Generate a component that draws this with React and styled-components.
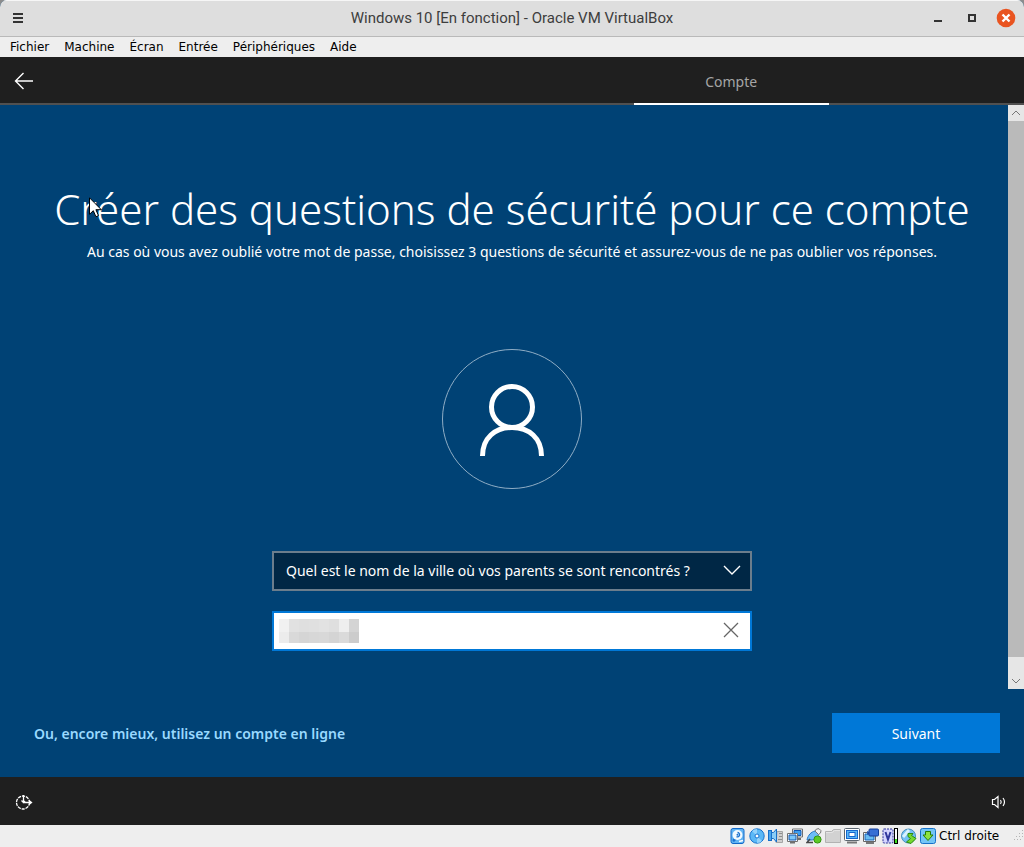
import React from 'react';
import styled, { createGlobalStyle } from 'styled-components';

const GlobalStyle = createGlobalStyle`
  * { box-sizing: border-box; }
  body { margin: 0; background: #8c8c8c; }
  button, input, select { font: inherit; margin: 0; }
  svg { display: block; flex: none; }
`;

const guestFont = '"Noto Sans", "Open Sans", sans-serif';
const hostFont = '"DejaVu Sans", sans-serif';

const Window = styled.div`
  display: flex;
  flex-direction: column;
  min-height: 100vh;
  overflow: hidden;
  border-radius: 7px 7px 0 0;
  background: #004275;
`;

const TitleBar = styled.header`
  display: grid;
  grid-template-columns: 112px 1fr 112px;
  align-items: center;
  height: 37px;
  padding: 0 8px 2px;
  border-top: 1px solid #f6f6f6;
  border-bottom: 1px solid #b9b9b9;
  background: #dedede;
`;

const WindowTitle = styled.div`
  font: 15px/20px Roboto, sans-serif;
  color: #3d3d3d;
  text-align: center;
  white-space: nowrap;
`;

const WindowControls = styled.div`
  display: flex;
  justify-content: flex-end;
  gap: 14px;
`;

const IconButton = styled.button`
  display: grid;
  place-items: center;
  width: ${(p) => p.$size}px;
  height: ${(p) => p.$size}px;
  padding: 0;
  border: 0;
  background: none;
  color: inherit;
`;

const MenuBar = styled.nav`
  display: flex;
  gap: 15px;
  height: 20px;
  padding: 0 10px;
  background: #eeeeee;
`;

const MenuItem = styled.button`
  padding: 0;
  border: 0;
  background: none;
  color: #000;
  font: 12px/20px ${hostFont};
`;

const SetupHeader = styled.div`
  display: grid;
  grid-template-columns: 48px 1fr;
  height: 48px;
  background: linear-gradient(#505050, #505050) bottom / 100% 2px no-repeat #1f1f1f;
  color: #fff;
`;

const Steps = styled.div`
  display: grid;
  grid-template-columns: repeat(5, 1fr);
`;

const Step = styled.button`
  grid-column: 4;
  padding: 4px 0 0;
  border: 0;
  border-bottom: 2px solid #fff;
  background: none;
  color: #a5a5a5;
  font: 14px/20px ${guestFont};
`;

const Main = styled.main`
  position: relative;
  display: flex;
  flex: 1;
  flex-direction: column;
  align-items: center;
  padding: 74px 24px 38px;
  color: #fff;
  font: 14px/20px ${guestFont};
`;

const Heading = styled.h1`
  position: relative;
  margin: 0;
  font: 300 42px/60px ${guestFont};
  text-align: center;
`;

const Pointer = styled.svg`
  position: absolute;
  top: 18px;
  left: 35px;
`;

const Subtitle = styled.p`
  margin: 3px 0 87px;
  text-align: center;
`;

const Avatar = styled.div`
  display: grid;
  place-items: center;
  width: 140px;
  height: 140px;
  margin-bottom: 62px;
  padding-top: 2px;
  border: 1px solid #8fadc5;
  border-radius: 50%;
`;

const Form = styled.form`
  display: grid;
  gap: 20px;
  width: 100%;
  max-width: 480px;
`;

const Field = styled.div`
  position: relative;
  height: 40px;
`;

const Question = styled.select`
  width: 100%;
  height: 40px;
  padding: 0 44px 0 12px;
  border: 2px solid #6b7d8c;
  border-radius: 0;
  appearance: none;
  background: #002745;
  color: #fff;
`;

const Chevron = styled.svg`
  position: absolute;
  top: 13px;
  right: 11px;
  pointer-events: none;
`;

const Answer = styled.input`
  width: 100%;
  height: 40px;
  padding: 0 44px 0 8px;
  border: 2px solid #0078d7;
  border-radius: 0;
  outline: 0;
  background: #fff;
  color: #000;
`;

const Mosaic = styled.svg`
  position: absolute;
  top: 8px;
  left: 7px;
`;

const ClearButton = styled(IconButton)`
  position: absolute;
  top: 8px;
  right: 10px;
`;

const ScrollBar = styled.div`
  position: absolute;
  top: 0;
  right: 0;
  bottom: 0;
  display: flex;
  flex-direction: column;
  width: 16px;
  background: #e6e6e6;
`;

const ScrollThumb = styled.div`
  flex: 1;
  margin-bottom: 16px;
  background: #bababa;
`;

const Actions = styled.div`
  display: flex;
  align-items: center;
  justify-content: space-between;
  height: 88px;
  padding: 0 24px 0 34px;
  font: 14px/20px ${guestFont};
`;

const OnlineLink = styled.a`
  padding-top: 2px;
  color: #99d9ff;
  font-weight: 600;
  text-decoration: none;
`;

const NextButton = styled.button`
  width: 168px;
  height: 40px;
  padding: 2px 0 0;
  border: 0;
  background: #0078d7;
  color: #fff;
`;

const Tray = styled.div`
  display: flex;
  align-items: center;
  justify-content: space-between;
  height: 48px;
  padding: 2px 15px 0 14px;
  background: #1f1f1f;
  color: #fff;
`;

const StatusBar = styled.footer`
  display: flex;
  align-items: center;
  justify-content: flex-end;
  gap: 3px;
  height: 22px;
  background: #eeeeee;
`;

const HostKey = styled.span`
  width: 72px;
  color: #000;
  font: 12px/20px ${hostFont};
  white-space: nowrap;
`;

const menus = ['Fichier', 'Machine', 'Écran', 'Entrée', 'Périphériques', 'Aide'];

const mosaicTop = ['#f1f1f1', '#e1e1e1', '#dfdfdf', '#e0e0e0', '#e2e2e2', '#dfdfdf', '#eeeeee', '#d4d4d4'];
const mosaicBottom = ['#ececec', '#d9d9d9', '#d5d5d5', '#d7d7d7', '#d8d8d8', '#d4d4d4', '#dadada', '#cccccc'];

const statusIcons = [
  <g key="disk">
    <rect x="1" y=".5" width="13" height="15" rx="2" fill="#62b5f4" stroke="#1268c8" />
    <circle cx="7.500" cy="7" r="5" fill="#f2faff" />
    <path d="M7.500 4.500a2.200 2.200 0 1 1-1 4.200" fill="none" stroke="#1c73d0" strokeWidth="1.300" />
    <circle cx="7.500" cy="6.700" r="1" fill="#1c73d0" />
    <path d="M3 10.500l3 1.500-2 2-1.500-1z" fill="#1c73d0" />
    <path d="M9 13.500l4-1" stroke="#fff" strokeWidth="1.500" />
  </g>,
  <g key="optical">
    <circle cx="8" cy="8" r="7.200" fill="#5bb8f6" stroke="#1673cf" />
    <path d="M8 8L3 3a7 7 0 0 1 5-2zM8 8l5 5a7 7 0 0 1-5 2z" fill="#93d2fb" />
    <circle cx="8" cy="8" r="2" fill="#fff" stroke="#1673cf" />
  </g>,
  <g key="audio">
    <path d="M9 3.500h5.500v11H8z" fill="#cfcfcf" stroke="#a5a5a5" />
    <path d="M11 5.500h3M11 8.500h3M10 11.500h4" stroke="#8d8d8d" />
    <rect x=".5" y="2.500" width="3" height="10" fill="#4aa6ee" stroke="#176fc8" />
    <path d="M3.500 4.500h2l3-3.500v13l-3-3.500h-2z" fill="#8acdf7" stroke="#176fc8" />
  </g>,
  <g key="network">
    <path d="M5.500 1h10v8h-10z" fill="#fff" stroke="#707070" />
    <path d="M7 2.500h7v5H7z" fill="#3d9df0" stroke="#1257ae" />
    <path d="M11 11h3" stroke="#707070" strokeWidth="2" />
    <path d="M.5 5.500h10v8H.5z" fill="#fff" stroke="#707070" />
    <path d="M2 7h7v5H2z" fill="#7cc8fa" stroke="#1257ae" />
    <path d="M3 14.500h5" stroke="#707070" strokeWidth="2" />
  </g>,
  <g key="usb">
    <path d="M1 12C2 7 5 4 9 3l3.500 3.500C12 10 9 12 5 12z" fill="#6cbcf6" stroke="#2475c5" />
    <path d="M9 3l1.500-2L13 .700l2 2-.5 2.300-2 1.500z" fill="#f2f2f2" stroke="#777" />
    <path d="M4 11l-3 3.500h6" fill="none" stroke="#484848" strokeWidth="1.500" />
    <circle cx="11.500" cy="11.500" r="3.600" fill="#5ccb26" stroke="#329510" />
  </g>,
  <g key="folders">
    <path d="M.5 14.500V3.500h6l2-2h7v13z" fill="#d2d2d2" stroke="#b2b2b2" />
    <path d="M1 4.500h6.500l2-2H15" fill="none" stroke="#e4e4e4" />
  </g>,
  <g key="display">
    <rect x=".5" y=".5" width="15" height="12" rx="1" fill="#fff" stroke="#5c6670" />
    <rect x="2.500" y="2.500" width="11" height="8" fill="#5bb8f6" stroke="#1466ce" />
    <rect x="5" y="4.500" width="6" height="4" fill="#fff" stroke="#1466ce" />
    <path d="M3 14.500h10" stroke="#777" strokeWidth="2" />
  </g>,
  <g key="recording">
    <path d="M.5 4.500h12v9H.5z" fill="#fff" stroke="#666" />
    <path d="M2 6h9v6H2z" fill="#69bdf3" stroke="#1762b5" />
    <path d="M4 3l2.500 1v2L4 7z" fill="#2858b0" />
    <rect x="6" y="1" width="9.500" height="7" rx="1" fill="#386fd4" stroke="#153f98" />
    <path d="M3 15h8" stroke="#777" strokeWidth="2" />
  </g>,
  <g key="cpu">
    <rect x="1" y="1" width="10" height="14" rx="1" fill="#d4d5ff" stroke="#2c3298" strokeDasharray="2 1" />
    <path d="M3.500 4L6 11.500 8.500 4" fill="none" stroke="#30389c" strokeWidth="2" />
    <path d="M12 0h4v16h-4z" fill="#000" />
    <path d="M13 1h2v10h-2z" fill="#fff" />
    <path d="M13 11h2v4h-2z" fill="#3ddc20" />
  </g>,
  <g key="mouse">
    <circle cx="7.500" cy="8" r="7" fill="#74c0f5" stroke="#478fbc" />
    <path d="M2 9l6-7" stroke="#d8f1ff" strokeWidth="3" />
    <path d="M7 5.500h5l-1.500 2 4.500 3-5 5-4.500-1.500 4-3.500-2.500-2z" fill="#75d82f" stroke="#2b8b0f" />
  </g>,
  <g key="keyboard">
    <rect x=".5" y=".5" width="15" height="15" rx="2" fill="#73c5f7" stroke="#1772c9" />
    <path d="M5.500 3.500h5V7H13l-5 5.500L3 7h2.500z" fill="#8de23f" stroke="#257b07" />
  </g>,
];

export default function App() {
  return (
    <>
      <GlobalStyle />
      <Window>
        <TitleBar>
          <IconButton $size={20} aria-label="Menu de la fenêtre">
            <svg width="10" height="10" fill="#333"><path d="M0 0h10v2H0zM0 4h10v2H0zM0 8h10v2H0z" /></svg>
          </IconButton>
          <WindowTitle>Windows 10 [En fonction] - Oracle VM VirtualBox</WindowTitle>
          <WindowControls>
            <IconButton $size={20} aria-label="Réduire">
              <svg width="8" height="8" fill="#333"><path d="M0 6h8v2H0z" /></svg>
            </IconButton>
            <IconButton $size={20} aria-label="Agrandir">
              <svg width="8" height="8" fill="none" stroke="#333" strokeWidth="2"><path d="M1 1h6v6H1z" /></svg>
            </IconButton>
            <IconButton $size={20} aria-label="Fermer">
              <svg width="20" height="20">
                <circle cx="10" cy="10" r="9.300" fill="#e95420" />
                <path d="M6.500 6.500l7 7M13.500 6.500l-7 7" stroke="#fff" strokeWidth="2.400" />
              </svg>
            </IconButton>
          </WindowControls>
        </TitleBar>
        <MenuBar>
          {menus.map((name) => <MenuItem key={name}>{name}</MenuItem>)}
        </MenuBar>
        <SetupHeader>
          <IconButton $size={48} aria-label="Retour">
            <svg width="20" height="18" fill="none" stroke="#fff" strokeWidth="1.400">
              <path d="M19 9H1.500M9.500 1l-8 8 8 8" />
            </svg>
          </IconButton>
          <Steps><Step>Compte</Step></Steps>
        </SetupHeader>
        <Main>
          <Heading>
            Créer des questions de sécurité pour ce compte
            <Pointer width="14" height="21" viewBox="0 0 14 21">
              <path d="M.5.800v16.500l3.800-3.600 2.600 6 2.600-1.100-2.600-5.900h5.400z" fill="#fff" stroke="#000" />
            </Pointer>
          </Heading>
          <Subtitle>
            Au cas où vous avez oublié votre mot de passe, choisissez 3 questions de sécurité et assurez-vous de ne pas oublier vos réponses.
          </Subtitle>
          <Avatar>
            <svg width="66" height="74" fill="none" stroke="#fff" strokeWidth="5">
              <circle cx="33" cy="24" r="20.500" />
              <path d="M3.500 73C3.500 55 16 44.500 33 44.500S62.500 55 62.500 73" />
            </svg>
          </Avatar>
          <Form onSubmit={(e) => e.preventDefault()}>
            <Field>
              <Question aria-label="Question de sécurité">
                <option>Quel est le nom de la ville où vos parents se sont rencontrés ?</option>
              </Question>
              <Chevron width="18" height="12" fill="none" stroke="#fff" strokeWidth="1.400">
                <path d="M1 2l8 8 8-8" />
              </Chevron>
            </Field>
            <Field>
              <Answer type="text" aria-label="Votre réponse" />
              <Mosaic width="80" height="24">
                {mosaicTop.map((c, i) => <rect key={i} x={i * 10} width="10" height="13" fill={c} />)}
                {mosaicBottom.map((c, i) => <rect key={i} x={i * 10} y="13" width="10" height="11" fill={c} />)}
              </Mosaic>
              <ClearButton type="button" $size={22} aria-label="Effacer">
                <svg width="16" height="16" fill="none" stroke="#666" strokeWidth="1.300">
                  <path d="M1 1l14 14M15 1L1 15" />
                </svg>
              </ClearButton>
            </Field>
          </Form>
          <ScrollBar>
            <IconButton $size={16} aria-label="Défiler vers le haut">
              <svg width="10" height="6" fill="none" stroke="#777"><path d="M1 5l4-4 4 4" /></svg>
            </IconButton>
            <ScrollThumb />
            <IconButton $size={16} aria-label="Défiler vers le bas">
              <svg width="10" height="6" fill="none" stroke="#777"><path d="M1 1l4 4 4-4" /></svg>
            </IconButton>
          </ScrollBar>
        </Main>
        <Actions>
          <OnlineLink href="#">Ou, encore mieux, utilisez un compte en ligne</OnlineLink>
          <NextButton>Suivant</NextButton>
        </Actions>
        <Tray>
          <IconButton $size={20} aria-label="Options d’ergonomie">
            <svg width="18" height="16" fill="none" stroke="#fff">
              <circle cx="8" cy="8.500" r="6.500" strokeWidth="1.300" strokeDasharray="3.200 .9" />
              <path d="M8.500 1v7.500H16M14 6.500l2.500 2-2.500 2M6.500 6.500l2 2 1.500-1.500" strokeWidth="1.300" />
            </svg>
          </IconButton>
          <IconButton $size={20} aria-label="Volume">
            <svg width="16" height="14" fill="none" stroke="#fff" strokeWidth="1.200">
              <path d="M1.500 4.500h2L7 1.500v11L3.500 9.500h-2zM9.500 5q1.500 2 0 4M12 3q3 4 0 8" />
            </svg>
          </IconButton>
        </Tray>
        <StatusBar>
          {statusIcons.map((icon) => <svg key={icon.key} width="16" height="16">{icon}</svg>)}
          <HostKey>Ctrl droite</HostKey>
          <svg width="10" height="12" fill="#b5b5b5">
            <path d="M8 0h1v1H8zM5 3h1v1H5zM8 3h1v1H8zM2 6h1v1H2zM5 6h1v1H5zM8 6h1v1H8zM0 9h1v1H0zM3 9h1v1H3zM6 9h1v1H6z" />
          </svg>
        </StatusBar>
      </Window>
    </>
  );
}
